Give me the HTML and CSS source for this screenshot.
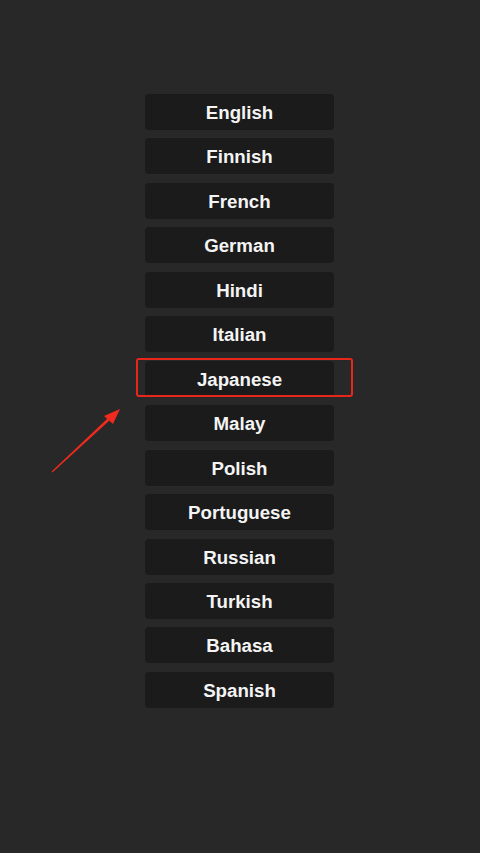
FILE: index.html
```html
<!DOCTYPE html>
<html>
<head>
<meta charset="utf-8">
<link rel="stylesheet" href="styles.css">
</head>
<body>
<div class="page">
  <div class="list">
    <div class="item">English</div>
    <div class="item">Finnish</div>
    <div class="item">French</div>
    <div class="item">German</div>
    <div class="item">Hindi</div>
    <div class="item">Italian</div>
    <div class="item">Japanese</div>
    <div class="item">Malay</div>
    <div class="item">Polish</div>
    <div class="item">Portuguese</div>
    <div class="item">Russian</div>
    <div class="item">Turkish</div>
    <div class="item">Bahasa</div>
    <div class="item">Spanish</div>
  </div>
  <div class="highlight"></div>
  <svg class="arrow" width="480" height="853" viewBox="0 0 480 853">
    <polygon points="51.6,471.6 52.4,472.4 109.5,420.5 107.5,418.5" fill="#f02a1e"/>
    <polygon points="120,409 113,424 104,416" fill="#f02a1e"/>
  </svg>
</div>
</body>
</html>
```
FILE: styles.css
```css
html, body {
  margin: 0;
  padding: 0;
  background: #282828;
}
.page {
  position: relative;
  width: 480px;
  height: 853px;
  overflow: hidden;
  font-family: "Liberation Sans", Arial, sans-serif;
}
.list {
  display: flex;
  flex-direction: column;
  align-items: center;
  gap: 8.46px;
  padding-top: 94px;
}
.item {
  box-sizing: border-box;
  width: 189px;
  height: 36px;
  padding-top: 2px;
  margin-left: -1px;
  background: #1b1b1b;
  border-radius: 4px;
  color: #f4f4f4;
  font-weight: bold;
  font-size: 18.7px;
  display: flex;
  align-items: center;
  justify-content: center;
}
.highlight {
  position: absolute;
  left: 136px;
  top: 358px;
  width: 213px;
  height: 35px;
  border: 2px solid #e8261c;
  border-radius: 3px;
}
.arrow {
  position: absolute;
  left: 0;
  top: 0;
  pointer-events: none;
}
```
